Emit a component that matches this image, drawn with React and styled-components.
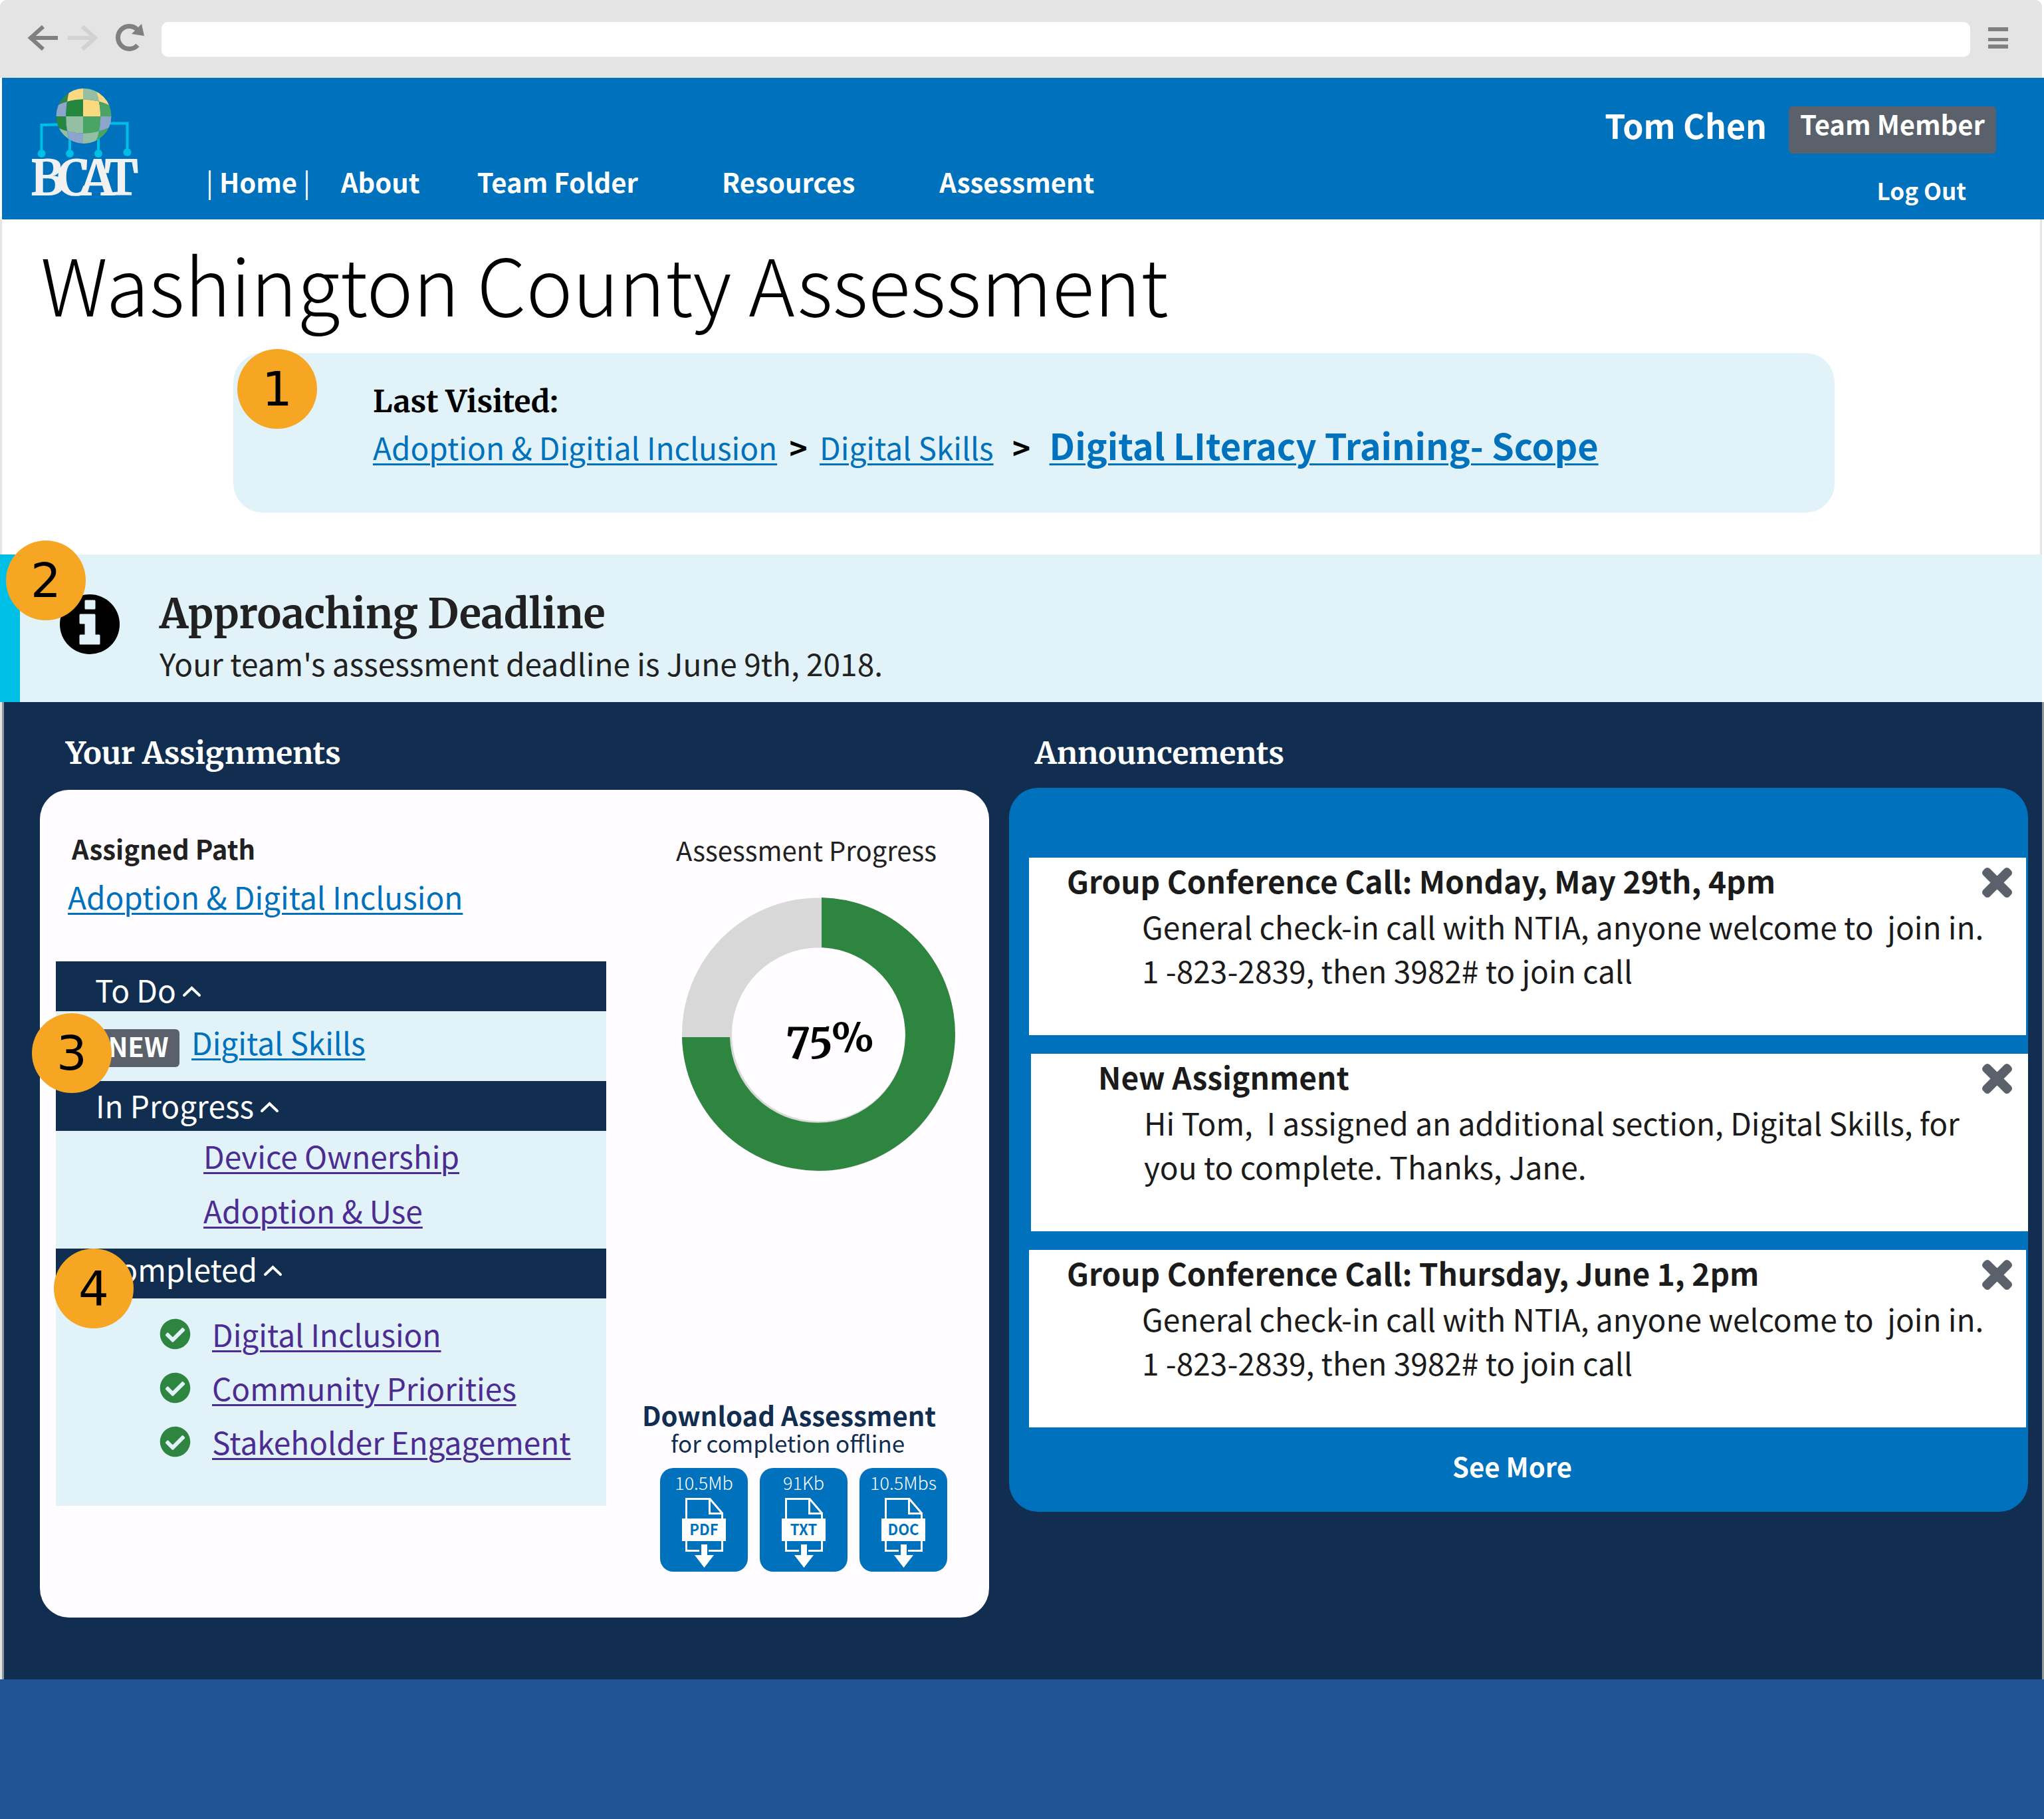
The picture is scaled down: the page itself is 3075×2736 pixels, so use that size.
import React from 'react';
import styled, { createGlobalStyle } from 'styled-components';
import { FaCheckCircle } from 'react-icons/fa';

const sans = '"Noto Sans CJK SC", "Noto Sans", sans-serif';
const serif = '"Merriweather", "Noto Serif", "DejaVu Serif Condensed", serif';

const color = {
  blue: '#0071bc',
  navy: '#112e51',
  royal: '#205493',
  pale: '#e1f2f8',
  cyan: '#00bfe7',
  grey: '#5b616b',
  green: '#2e8540',
  purple: '#4c2c92',
  ink: '#212121',
  frame: '#e4e4e4',
  amber: '#f6a623',
  card: '#fffdff',
};

const GlobalStyle = createGlobalStyle`
  *, *::before, *::after { box-sizing: border-box; }
  body { margin: 0; background: #fff; font-family: ${sans}; font-size: 46px; color: ${color.ink}; }
  h1, h2, h3, p, ul { margin: 0; padding: 0; }
  ul { list-style: none; }
  svg { display: block; flex: none; overflow: visible; }
  button { margin: 0; padding: 0; border: 0; background: none; color: inherit; font: inherit; text-align: left; cursor: pointer; }
`;

const Page = styled.div`
  display: flex;
  flex-direction: column;
  min-height: 100vh;
`;

/* Browser frame */

const Chrome = styled.div`
  display: flex;
  align-items: flex-start;
  height: 117px;
  margin-right: 3px;
  padding: 33px 51px 0 42px;
  border-radius: 10px 10px 0 0;
  background: ${color.frame};
`;

const ChromeButton = styled.button`
  display: flex;
  align-items: center;
  height: 48px;
  margin-right: ${p => p.$gap || 0}px;
`;

const AddressBar = styled.input`
  flex: 1;
  min-width: 0;
  height: 53px;
  margin-right: 27px;
  padding: 0 20px;
  border: 0;
  border-bottom: 1px solid #f1f1f1;
  border-radius: 10px;
  background: #fff;
  font: 30px ${sans};
`;

/* Site header */

const Header = styled.header`
  display: flex;
  align-items: flex-start;
  min-height: 213px;
  margin-left: 3px;
  padding: 0 72px 0 42px;
  background: ${color.blue};
  color: #fff;
  font-weight: 700;
  white-space: nowrap;
`;

const LogoLink = styled.a`
  display: block;
  padding-top: 13px;
`;

const Nav = styled.nav`
  display: flex;
  align-self: flex-end;
  padding: 0 0 27px 100px;
  font-size: 40px;
  line-height: 60px;
`;

const NavLink = styled.a`
  margin-left: ${p => p.$gap || 0}px;
  color: inherit;
  text-decoration: none;
`;

const NavBar = styled.span`
  font-weight: 400;
`;

const Account = styled.div`
  display: flex;
  flex-direction: column;
  align-items: flex-end;
  margin-left: auto;
  padding-top: 35px;
`;

const AccountRow = styled.div`
  display: flex;
  align-items: flex-start;
  gap: 33px;
`;

const UserName = styled.span`
  font-size: 50px;
  line-height: 70px;
`;

const RoleBadge = styled.span`
  margin-top: 8px;
  padding: 0 17px 19px;
  border-radius: 6px;
  background: ${color.grey};
  font-size: 40px;
  line-height: 52px;
`;

const LogOut = styled.a`
  margin: 30px 45px 0 0;
  color: inherit;
  font-size: 35px;
  line-height: 50px;
  text-decoration: none;
`;

/* Intro */

const Intro = styled.section`
  margin-right: 3px;
  padding-bottom: 63px;
  border: solid ${color.frame};
  border-width: 0 3px;
`;

const Title = styled.h1`
  padding: 25px 58px 0;
  color: #000;
  font-size: 118px;
  font-weight: 300;
  line-height: 140px;
`;

const LastVisited = styled.div`
  position: relative;
  min-height: 240px;
  margin: 36px 309px 0 348px;
  padding: 43px 60px 0 210px;
  border-radius: 44px;
  background: ${color.pale};
  color: #000;
`;

const LastVisitedTitle = styled.h2`
  font-family: ${serif};
  font-size: 46px;
  line-height: 60px;
`;

const Trail = styled.nav`
  display: flex;
  align-items: baseline;
  line-height: 70px;
`;

const TrailMark = styled.span`
  width: ${p => p.$width}px;
  font-weight: 700;
  text-align: center;
`;

const TextLink = styled.a`
  color: ${p => (p.$visited ? color.purple : color.blue)};
  font-size: ${p => (p.$strong ? 54 : 46)}px;
  font-weight: ${p => (p.$strong ? 700 : 400)};
  text-decoration: underline;
  text-decoration-thickness: 3px;
  text-underline-offset: 5px;
`;

const Marker = styled.span`
  position: absolute;
  left: ${p => p.$left}px;
  top: ${p => p.$top}px;
  z-index: 1;
  width: 120px;
  height: 120px;
  border-radius: 50%;
  background: ${color.amber};
  color: #000;
  font-family: "DejaVu Sans", sans-serif;
  font-size: 72px;
  font-weight: 400;
  line-height: 120px;
  text-align: center;
`;

/* Alert */

const Alert = styled.section`
  position: relative;
  display: flex;
  gap: 60px;
  margin-right: 3px;
  padding: 50px 60px 26px;
  border-left: 30px solid ${color.cyan};
  background: ${color.pale};
`;

const AlertIcon = styled.span`
  padding-top: 10px;
`;

const AlertTitle = styled.h2`
  font-family: ${serif};
  font-size: 61px;
  line-height: 80px;
`;

const AlertText = styled.p`
  line-height: 66px;
`;

/* Dashboard */

const Dashboard = styled.main`
  display: grid;
  grid-template-columns: 1428fr 1533fr;
  align-items: start;
  gap: 30px;
  margin-left: 3px;
  padding: 47px 21px 93px 54px;
  border: solid #8f9799;
  border-width: 0 3px;
  background: ${color.navy};
  box-shadow: -3px 0 ${color.frame};
`;

const ColumnTitle = styled.h2`
  padding-left: 39px;
  color: #fff;
  font-family: ${serif};
  font-size: 46px;
  line-height: 60px;
`;

const Assignments = styled.div`
  display: grid;
  grid-template-columns: 828fr 522fr;
  gap: 54px;
  margin-top: 25px;
  padding-left: 24px;
  border-radius: 44px;
  background: ${color.card};
`;

const PathColumn = styled.div`
  padding: 58px 0 168px;
`;

const PathTitle = styled.h3`
  padding-left: 24px;
  font-size: 40px;
  line-height: 60px;
`;

const PathLink = styled.p`
  margin: 7px 0 63px;
  padding-left: 18px;
  line-height: 70px;
`;

const Section = styled.section`
  position: relative;
`;

const SectionHead = styled.button`
  display: flex;
  gap: 10px;
  width: 100%;
  height: 75px;
  padding: ${p => p.$drop}px 0 0 ${p => p.$inset}px;
  background: ${color.navy};
  color: #fff;
  line-height: 60px;
`;

const Caret = styled.svg`
  margin-top: 25px;
`;

const SectionBody = styled.ul`
  display: flex;
  flex-direction: column;
  gap: ${p => p.$gap || 0}px;
  padding: ${p => p.$pad};
  background: ${color.pale};
  line-height: 72px;
`;

const NewItem = styled.li`
  display: flex;
  align-items: flex-start;
  gap: 18px;
  line-height: 60px;
`;

const NewBadge = styled.span`
  width: 124px;
  margin-top: 11px;
  padding-bottom: 6px;
  border-radius: 6px;
  background: ${color.grey};
  color: #fff;
  font-size: 40px;
  font-weight: 700;
  line-height: 51px;
  text-align: center;
`;

const DoneItem = styled.li`
  display: flex;
  align-items: center;
  gap: 32px;
`;

const ProgressColumn = styled.div`
  display: flex;
  flex-direction: column;
  align-items: flex-start;
  padding: 60px 0 69px;
`;

const ProgressTitle = styled.h3`
  padding-left: 51px;
  font-size: 40px;
  font-weight: 400;
  line-height: 60px;
`;

const Donut = styled.svg`
  margin: 42px 0 60px 60px;
`;

const DonutValue = styled.text`
  fill: #000;
  font-family: ${serif};
  font-size: 61px;
  font-weight: 700;
  font-variant-numeric: oldstyle-nums;
  text-anchor: middle;
`;

const Download = styled.div`
  margin-top: auto;
  color: ${color.navy};
`;

const DownloadTitle = styled.h3`
  font-size: 40px;
  line-height: 44px;
`;

const DownloadNote = styled.p`
  padding-left: 43px;
  font-size: 35px;
  line-height: 40px;
`;

const Files = styled.div`
  display: flex;
  gap: 18px;
  padding: 18px 0 0 27px;
`;

const FileButton = styled.button`
  display: flex;
  flex-direction: column;
  align-items: center;
  gap: 3px;
  width: 132px;
  height: 156px;
  padding-top: 2px;
  border-radius: 20px;
  background: ${color.blue};
  color: #fff;
  font-size: 27px;
  font-weight: 300;
  line-height: 40px;
`;

/* Announcements */

const Panel = styled.div`
  display: flex;
  flex-direction: column;
  gap: 28px;
  margin-top: 22px;
  padding: 105px 3px 39px 30px;
  border-radius: 44px;
  background: ${color.blue};
`;

const Notice = styled.article`
  min-height: 267px;
  margin: ${p => (p.$indent ? '0 -3px 0 3px' : '0')};
  padding: 4px ${p => (p.$indent ? 24 : 21)}px 0 0;
  background: #fff;
  color: #1b1b1b;
`;

const NoticeHead = styled.div`
  display: flex;
  justify-content: space-between;
  padding-left: ${p => (p.$indent ? 101 : 57)}px;
`;

const NoticeTitle = styled.h3`
  font-size: 46px;
  line-height: 60px;
`;

const Close = styled.button`
  align-self: flex-start;
  margin-top: 11px;
  color: ${color.grey};
`;

const NoticeText = styled.p`
  margin-top: 6px;
  padding-left: 170px;
  line-height: 66px;
  white-space: pre-line;
`;

const SeeMore = styled.button`
  align-self: center;
  margin-right: 46px;
  color: #fff;
  font-size: 40px;
  font-weight: 700;
  line-height: 60px;
`;

const Footer = styled.footer`
  flex: 1;
  min-height: 210px;
  background: ${color.royal};
`;

/* Drawings */

const globeRows = [
  { clip: 'M30 0H131V34Q79.7 5 30 34Z', fills: ['#2e8540', '#fbd980', '#94bfa2', '#fbd980'] },
  { clip: 'M30 34Q79.7 5 131 34V45H30Z', fills: ['#8ba6ca', '#24863f', '#fbd980', '#4aa564'] },
  { clip: 'M30 45H131V56Q80 85 30 56Z', fills: ['#24863f', '#94bfa2', '#4aa564', '#8ba6ca'] },
  { clip: 'M30 56Q80 85 131 56V90H30Z', fills: ['#94bfa2', '#8ba6ca', '#94bfa2', '#4aa564'] },
];
const globeColumns = [
  'M30 0H61Q47.6 45 61 90H30Z',
  'M61 0H80V90H61Q47.6 45 61 0Z',
  'M80 0H97Q115.6 45 97 90H80Z',
  'M97 0H131V90H97Q115.6 45 97 0Z',
];

function Logo() {
  return (
    <svg width="165" height="170" viewBox="0 0 165 170" role="img" aria-label="BCAT">
      <g fill="none" stroke={color.cyan} strokeWidth="4">
        <path d="M17.5 101V58L81 56.5" />
        <path d="M60 101V60M103 101V60" />
        <path d="M146.5 99V55.5H81" />
      </g>
      <g fill={color.cyan}>
        <circle cx="17.5" cy="101" r="6" />
        <circle cx="60" cy="101" r="6" />
        <circle cx="103" cy="101" r="6" />
        <circle cx="146.5" cy="99" r="6" />
      </g>
      <clipPath id="globe"><circle cx="81" cy="44.5" r="41.5" /></clipPath>
      {globeRows.map((row, i) => (
        <clipPath key={i} id={`globe-row-${i}`}><path d={row.clip} /></clipPath>
      ))}
      <g clipPath="url(#globe)">
        {globeRows.map((row, i) => (
          <g key={i} clipPath={`url(#globe-row-${i})`}>
            {globeColumns.map((d, j) => <path key={j} d={d} fill={row.fills[j]} />)}
          </g>
        ))}
      </g>
      <text x="0 41 75 111" y="164" fill="#f1f1f1" fontFamily={serif} fontSize="74" fontWeight="700">BCAT</text>
    </svg>
  );
}

function Arrow({ flip, stroke }) {
  return (
    <svg width="45" height="38" viewBox="0 0 45 38" fill="none" stroke={stroke} strokeWidth="6">
      <g transform={flip ? 'translate(45 0) scale(-1 1)' : undefined}>
        <path d="M23 2L4 19L23 36M4 19H45" />
      </g>
    </svg>
  );
}

function Reload() {
  return (
    <svg width="43" height="42" viewBox="0 0 43 42">
      <path d="M33 32A17 17 0 1 1 32 8" fill="none" stroke="#808080" strokeWidth="7" />
      <path d="M39 0L43 18L24 15Z" fill="#808080" />
    </svg>
  );
}

function Menu() {
  return (
    <svg width="30" height="32" viewBox="0 0 30 32" fill="#808080">
      <path d="M0 0H30V6H0ZM0 16H30V21H0ZM0 26H30V32H0Z" />
    </svg>
  );
}

function Info() {
  return (
    <svg width="90" height="90" viewBox="0 0 90 90">
      <circle cx="45" cy="45" r="45" fill="#000" />
      <path
        d="M39 10H52V21H39ZM31 31H52V62H59V74H31V62H39V43H31Z"
        fill={color.pale}
        stroke={color.pale}
        strokeWidth="3"
        strokeLinejoin="round"
      />
    </svg>
  );
}

function Up() {
  return (
    <Caret width="27" height="17" viewBox="0 0 27 17" fill="none" stroke="#fff" strokeWidth="4" strokeLinecap="round">
      <path d="M2 14L13.5 3L25 14" />
    </Caret>
  );
}

function ProgressDonut({ value }) {
  return (
    <Donut width="411" height="411" viewBox="0 0 411 411" role="img" aria-label="Assessment progress">
      <circle cx="205.5" cy="206" r="168" fill="none" stroke="#d8d8d8" strokeWidth="75" />
      <path d="M210 0A205.5 205.5 0 1 1 0 210H72A132 132 0 1 0 210 75Z" fill={color.green} />
      <DonutValue x="223" y="233">{value}</DonutValue>
    </Donut>
  );
}

function FileIcon({ type }) {
  return (
    <svg width="66" height="106" viewBox="0 0 66 106">
      <g fill="none" stroke="#fff" strokeWidth="3">
        <path d="M6.5 32V1.5H42L60.5 23V32M41.5 1.5V23.5H60.5" />
        <path d="M6.5 64V79.5H26M40 79.5H60.5V64" />
      </g>
      <path d="M0 31H66V65H0Z" fill="#fff" />
      <path d="M29 70H38V86H48L33.500 105L19 86H29Z" fill="#fff" />
      <text x="33" y="56" textAnchor="middle" fill={color.blue} fontFamily={sans} fontSize="22" fontWeight="700">{type}</text>
    </svg>
  );
}

function Cross() {
  return (
    <svg width="45" height="45" viewBox="-12 68 376 376" fill="currentColor" stroke="currentColor" strokeWidth="24" strokeLinejoin="round">
      <path d="M242.72 256l100.07-100.07c12.28-12.28 12.28-32.19 0-44.48l-22.24-22.24c-12.28-12.28-32.19-12.28-44.48 0L176 189.28 75.93 89.21c-12.28-12.28-32.19-12.28-44.48 0L9.21 111.45c-12.28 12.28-12.28 32.19 0 44.48L109.28 256 9.21 356.07c-12.28 12.28-12.28 32.19 0 44.48l22.24 22.24c12.28 12.28 32.2 12.28 44.48 0L176 322.72l100.07 100.07c12.28 12.28 32.2 12.28 44.48 0l22.24-22.24c12.28-12.28 12.28-32.19 0-44.48L242.72 256z" />
    </svg>
  );
}

/* Data */

const navLinks = [
  { label: 'About', gap: 46 },
  { label: 'Team Folder', gap: 86 },
  { label: 'Resources', gap: 126 },
  { label: 'Assessment', gap: 127 },
];

const inProgress = ['Device Ownership', 'Adoption & Use'];
const completed = ['Digital Inclusion', 'Community Priorities', 'Stakeholder Engagement'];

const files = [
  { type: 'PDF', size: '10.5Mb' },
  { type: 'TXT', size: '91Kb' },
  { type: 'DOC', size: '10.5Mbs' },
];

const callText = 'General check-in call with NTIA, anyone welcome to \u00a0join in.\n1 -823-2839, then 3982# to join call';

const notices = [
  { title: 'Group Conference Call: Monday, May 29th, 4pm', text: callText },
  {
    title: 'New Assignment',
    text: 'Hi Tom, \u00a0I assigned an additional section, Digital Skills, for\nyou to complete. Thanks, Jane.',
    indent: true,
  },
  { title: 'Group Conference Call: Thursday, June 1, 2pm', text: callText },
];

export default function App() {
  return (
    <Page>
      <GlobalStyle />
      <Chrome>
        <ChromeButton $gap={15} aria-label="Back"><Arrow stroke="#808080" /></ChromeButton>
        <ChromeButton $gap={27} aria-label="Forward"><Arrow flip stroke="#d2d2d2" /></ChromeButton>
        <ChromeButton $gap={26} aria-label="Reload"><Reload /></ChromeButton>
        <AddressBar aria-label="Address" />
        <ChromeButton aria-label="Menu"><Menu /></ChromeButton>
      </Chrome>

      <Header>
        <LogoLink href="#home"><Logo /></LogoLink>
        <Nav>
          <NavLink href="#home" aria-current="page"><NavBar>|</NavBar> Home <NavBar>|</NavBar></NavLink>
          {navLinks.map(link => (
            <NavLink key={link.label} href="#nav" $gap={link.gap}>{link.label}</NavLink>
          ))}
        </Nav>
        <Account>
          <AccountRow>
            <UserName>Tom Chen</UserName>
            <RoleBadge>Team Member</RoleBadge>
          </AccountRow>
          <LogOut href="#logout">Log Out</LogOut>
        </Account>
      </Header>

      <Intro>
        <Title>Washington County Assessment</Title>
        <LastVisited>
          <Marker $left={6} $top={-6}>1</Marker>
          <LastVisitedTitle>Last Visited:</LastVisitedTitle>
          <Trail>
            <TextLink href="#path">Adoption &amp; Digitial Inclusion</TextLink>
            <TrailMark $width={64}>&gt;</TrailMark>
            <TextLink href="#skills">Digital Skills</TextLink>
            <TrailMark $width={84}>&gt;</TrailMark>
            <TextLink href="#training" $strong>Digital LIteracy Training- Scope</TextLink>
          </Trail>
        </LastVisited>
      </Intro>

      <Alert>
        <Marker $left={-21} $top={-21}>2</Marker>
        <AlertIcon><Info /></AlertIcon>
        <div>
          <AlertTitle>Approaching Deadline</AlertTitle>
          <AlertText>Your team's assessment deadline is June 9th, 2018.</AlertText>
        </div>
      </Alert>

      <Dashboard>
        <section>
          <ColumnTitle>Your Assignments</ColumnTitle>
          <Assignments>
            <PathColumn>
              <PathTitle>Assigned Path</PathTitle>
              <PathLink><TextLink href="#path">Adoption &amp; Digital Inclusion</TextLink></PathLink>
              <Section>
                <SectionHead $drop={12} $inset={59}>To Do<Up /></SectionHead>
                <SectionBody $pad="16px 0 21px 62px">
                  <NewItem>
                    <Marker $left={-36} $top={78}>3</Marker>
                    <NewBadge>NEW</NewBadge>
                    <TextLink href="#skills">Digital Skills</TextLink>
                  </NewItem>
                </SectionBody>
              </Section>
              <Section>
                <SectionHead $drop={6} $inset={60}>In Progress<Up /></SectionHead>
                <SectionBody $pad="1px 0 22px 222px" $gap={10}>
                  {inProgress.map(item => (
                    <li key={item}><TextLink href="#item" $visited>{item}</TextLink></li>
                  ))}
                </SectionBody>
              </Section>
              <Section>
                <Marker $left={-3} $top={0}>4</Marker>
                <SectionHead $drop={0} $inset={66}>Completed<Up /></SectionHead>
                <SectionBody $pad="17px 0 61px 156px" $gap={9}>
                  {completed.map(item => (
                    <DoneItem key={item}>
                      <FaCheckCircle size={47} color={color.green} />
                      <TextLink href="#item" $visited>{item}</TextLink>
                    </DoneItem>
                  ))}
                </SectionBody>
              </Section>
            </PathColumn>
            <ProgressColumn>
              <ProgressTitle>Assessment Progress</ProgressTitle>
              <ProgressDonut value="75%" />
              <Download>
                <DownloadTitle>Download Assessment</DownloadTitle>
                <DownloadNote>for completion offline</DownloadNote>
                <Files>
                  {files.map(file => (
                    <FileButton key={file.type}>
                      {file.size}
                      <FileIcon type={file.type} />
                    </FileButton>
                  ))}
                </Files>
              </Download>
            </ProgressColumn>
          </Assignments>
        </section>

        <section>
          <ColumnTitle>Announcements</ColumnTitle>
          <Panel>
            {notices.map(notice => (
              <Notice key={notice.title} $indent={notice.indent}>
                <NoticeHead $indent={notice.indent}>
                  <NoticeTitle>{notice.title}</NoticeTitle>
                  <Close aria-label="Dismiss"><Cross /></Close>
                </NoticeHead>
                <NoticeText>{notice.text}</NoticeText>
              </Notice>
            ))}
            <SeeMore>See More</SeeMore>
          </Panel>
        </section>
      </Dashboard>

      <Footer />
    </Page>
  );
}
